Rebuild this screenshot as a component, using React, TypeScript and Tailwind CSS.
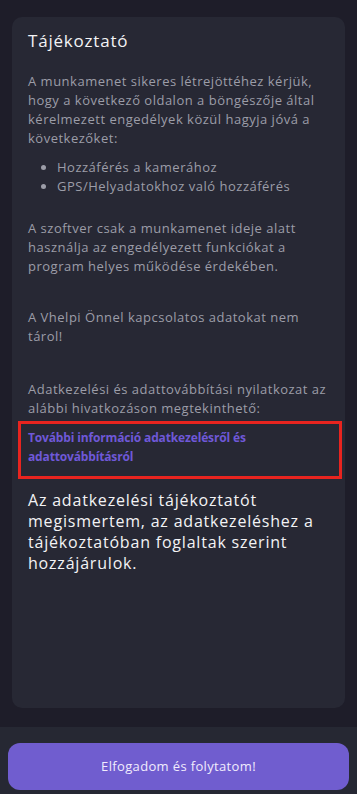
import React from 'react';

const body = 'text-[13px] leading-[19px] tracking-[0.5px] text-[#9c9da8]';

export default function App() {
  return (
    <div
      className="h-[794px] bg-[#1e1d29] flex flex-col overflow-hidden"
      style={{ fontFamily: '"Open Sans", "Noto Sans", sans-serif' }}
    >
      <div className="px-3 pt-[17px]">
        <div className="h-[691px] rounded-[10px] bg-[#272834] px-4 pt-[12px]">
          <h1 className="text-[17px] leading-[24px] tracking-[0.8px] font-medium text-[#f3f3f5]">
            Tájékoztató
          </h1>

          <p className={`mt-[19px] ${body}`}>
            A munkamenet sikeres létrejöttéhez kérjük,
            <br />
            hogy a következő oldalon a böngészője által
            <br />
            kérelmezett engedélyek közül hagyja jóvá a
            <br />
            következőket:
          </p>
          <ul className={`mt-[10px] list-disc pl-[29px] ${body}`}>
            <li>Hozzáférés a kamerához</li>
            <li>GPS/Helyadatokhoz való hozzáférés</li>
          </ul>

          <p className={`mt-[23px] ${body}`}>
            A szoftver csak a munkamenet ideje alatt
            <br />
            használja az engedélyezett funkciókat a
            <br />
            program helyes működése érdekében.
          </p>

          <p className={`mt-[32px] ${body}`}>
            A Vhelpi Önnel kapcsolatos adatokat nem
            <br />
            tárol!
          </p>

          <p className={`mt-[34px] ${body}`}>
            Adatkezelési és adattovábbítási nyilatkozat az
            <br />
            alábbi hivatkozáson megtekinthető:
          </p>

          {/* link box */}
          <div className="mt-[3px] -ml-[10px] -mr-[13px] border-[3px] border-[#e8241f] px-[7px] pt-[4px] pb-[10px]">
            <a className="block text-[12px] leading-[19px] tracking-[-0.15px] font-bold text-[#6f58d8]">
              További információ adatkezelésről és
              <br />
              adattovábbításról
            </a>
          </div>

          <p className="mt-[11px] text-[16px] leading-[21px] tracking-[0.8px] font-medium text-[#f3f3f5]">
            Az adatkezelési tájékoztatót
            <br />
            megismertem, az adatkezeléshez a
            <br />
            tájékoztatóban foglaltak szerint
            <br />
            hozzájárulok.
          </p>
        </div>
      </div>

      <div className="mt-[19px] flex-1 bg-[#262833] px-2 pt-[16px]">
        <button className="h-[47px] w-full rounded-[12px] bg-[#705dcf] text-[13px] tracking-[0.35px] font-medium text-[#f1ecfd]">
          Elfogadom és folytatom!
        </button>
      </div>
    </div>
  );
}
